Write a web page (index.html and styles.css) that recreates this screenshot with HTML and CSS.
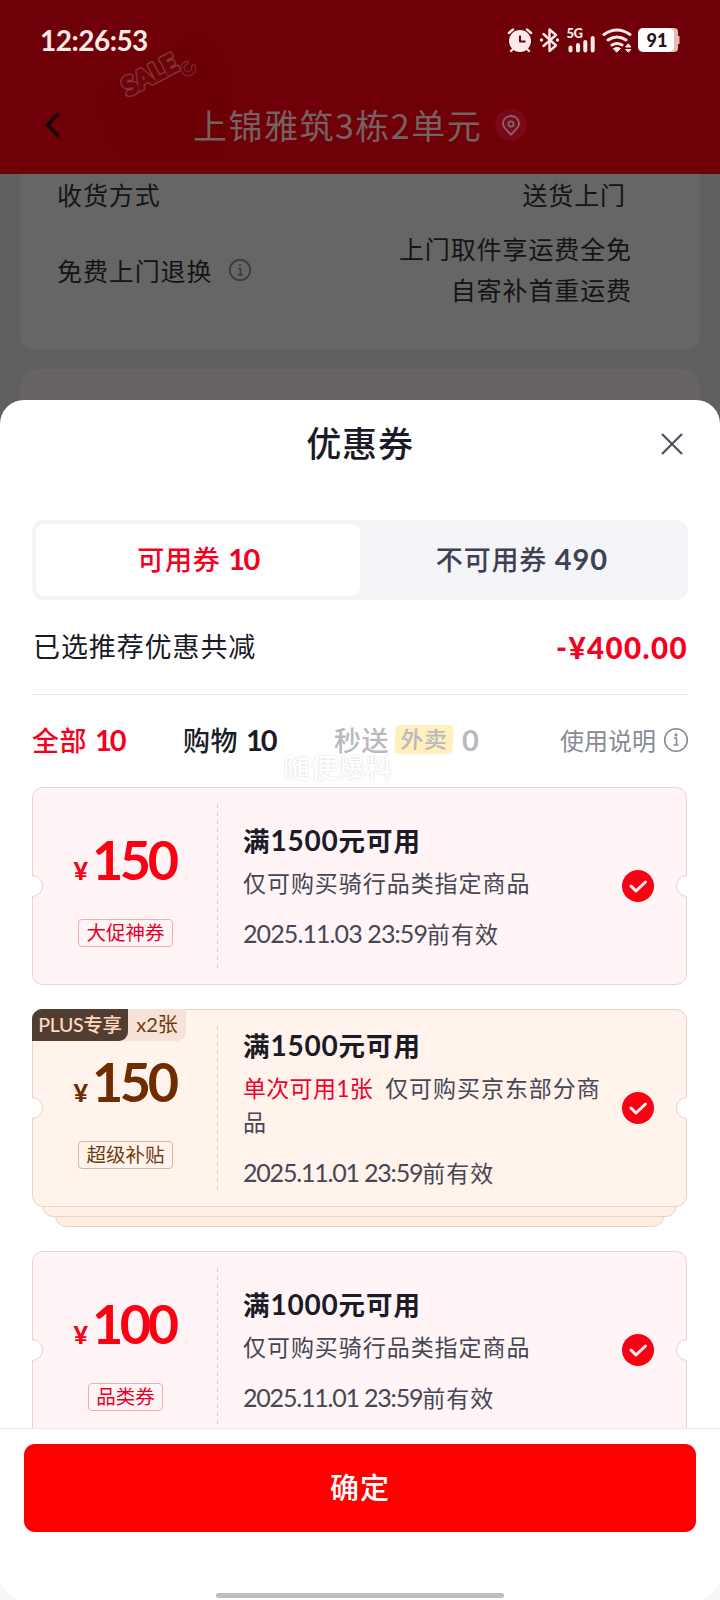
FILE: index.html
```html
<!DOCTYPE html>
<html lang="zh-CN">
<head>
<meta charset="utf-8">
<title>优惠券</title>
<link rel="stylesheet" href="styles.css">
</head>
<body>
<div class="phone">
  <header class="top">
    <svg class="sale" width="260" height="174" viewBox="0 0 260 174">
      <path d="M98 88 200 28 228 60 236 130 222 158H130Q95 150 98 88Z" fill="#640003" opacity=".3"/>
      <g transform="translate(129 96) rotate(-28)">
        <text x="-1" y="0" class="sale-text sale-edge">SALE</text>
        <text x="-1" y="0" class="sale-text sale-fill">SALE</text>
      </g>
      <path d="M187 61a7.500 7.500 0 1 0 8 4a2 2 0 0 0-3.500 1.500a3.800 3.800 0 1 1-4-2.500a1.600 1.600 0 0 0-.5-3Z" fill="none" stroke="#7b2529" stroke-width="1.300"/>
    </svg>
    <div class="status">
      <span class="time">12:26:53</span>
      <svg class="status-icons" width="176" height="30" viewBox="504 25 176 30" fill="none" stroke="#ffeaea" stroke-linecap="round" stroke-linejoin="round">
        <circle cx="520" cy="41" r="11" fill="#ffeaea" stroke="none"/>
        <path d="M508.800 33 513 29.500M531.200 33 527 29.500M512.500 49.500 511 51M527.500 49.500 529 51" stroke-width="2.300"/>
        <path d="M520 35.500V41.500H525.500" stroke="#70000a" stroke-width="2" stroke-linecap="butt"/>
        <path d="M543.500 34 556 45.500 549.500 51V29.500L556 35 543.500 46" stroke-width="2.400"/>
        <circle cx="541.500" cy="40" r="1.700" fill="#ffeaea" stroke="none"/><circle cx="557.500" cy="40" r="1.700" fill="#ffeaea" stroke="none"/>
        <text x="566.500" y="38" class="five-g">5G</text>
        <path d="M570.500 47.500V50.500M578 45V50.500M585.300 42V50.500M592.700 38V50.500" stroke-width="4"/>
        <path d="M604 34.500Q617 25.500 630 34.500M608 40Q617 34 626 40M612 45Q617 42 622 45" stroke-width="3"/>
        <path d="M613.500 48.500Q617 46 620.500 48.500L617 52Z" fill="#ffeaea" stroke-width="1"/>
        <path d="M628.500 44 631 47H626ZM628.500 52 631 49.500H626Z" fill="#ffeaea" stroke-width="1"/>
        <path d="M670 28h4q4 0 4 4v4h1.500v8H678v4q0 4-4 4h-4Z" fill="#eab8bb" stroke="none"/>
        <rect x="638" y="28" width="36" height="24" rx="5" fill="#fff" stroke="none"/>
        <text x="657" y="46.500" class="battery">91</text>
      </svg>
    </div>
    <div class="navbar">
      <svg class="back" width="20" height="30" viewBox="0 0 20 30"><path d="M15.500 4 4.500 15 15.500 26" fill="none" stroke="#150506" stroke-width="3.600"/></svg>
      <h1 class="address">上锦雅筑3栋2单元</h1>
      <svg class="pin" width="32" height="32" viewBox="0 0 32 32"><circle cx="16" cy="16" r="16" fill="#7a0818"/><path d="M16 25.500C12.500 22 8 18.500 8 14.500a8 7.500 0 0 1 16 0C24 18.500 19.500 22 16 25.500Z" fill="none" stroke="#81686c" stroke-width="1.800"/><circle cx="16" cy="15" r="2.600" fill="none" stroke="#81686c" stroke-width="1.800"/></svg>
    </div>
  </header>

  <main class="behind">
    <section class="info">
      <div class="row first"><span>收货方式</span><span class="ship">送货上门</span></div>
      <div class="row second">
        <span class="label">免费上门退换
          <svg width="24" height="24" viewBox="0 0 24 24" fill="none" stroke="#393939" stroke-width="1.700"><circle cx="12" cy="12" r="10.200"/><path d="M10 10.500h2.500v6.500M9.500 17h5.500M11 7h2"/></svg>
        </span>
        <span class="fees">上门取件享运费全免<br>自寄补首重运费</span>
      </div>
    </section>
    <section class="next-card"></section>
  </main>

  <section class="sheet">
    <div class="sheet-head">
      <h2>优惠券</h2>
      <svg class="close" width="24" height="24" viewBox="0 0 24 24"><path d="M2 2 22 22M22 2 2 22" stroke="#4e5060" stroke-width="2.200"/></svg>
    </div>

    <div class="tabs">
      <div class="tab active">可用券 <b>10</b></div>
      <div class="tab">不可用券 <b>490</b></div>
    </div>

    <div class="summary"><span>已选推荐优惠共减</span><strong>-¥400.00</strong></div>

    <div class="filters">
      <span class="filter on">全部 <b>10</b></span>
      <span class="filter shop">购物 <b>10</b></span>
      <span class="filter off">秒送<i>外卖</i><b>0</b></span>
      <span class="help">使用说明
        <svg width="26" height="26" viewBox="0 0 26 26" fill="none" stroke="#888b94" stroke-width="1.600"><circle cx="13" cy="13" r="11.300"/><path d="M11 11h2.500v7M10.500 18h5"/><circle cx="13" cy="7.800" r=".8"/></svg>
      </span>
      <span class="watermark">随便爆料</span>
    </div>

    <div class="list">
      <div class="slot">
        <article class="coupon">
          <div class="value"><div class="price"><small>¥</small>150</div><div class="tag">大促神券</div></div>
          <div class="detail"><h3>满<b>1500</b>元可用</h3><p>仅可购买骑行品类指定商品</p><time><b>2025.11.03 23:59</b>前有效</time></div>
          <svg class="check" width="32" height="32" viewBox="0 0 32 32"><circle cx="16" cy="16" r="16" fill="#fb0012"/><path d="M9 16 14 21 23.500 12" fill="none" stroke="#fff0f1" stroke-width="3" stroke-linecap="round" stroke-linejoin="round"/></svg>
        </article>
      </div>

      <div class="slot stacked">
        <article class="coupon plus">
          <div class="ribbon"><span>PLUS专享</span><em>x2张</em></div>
          <div class="value"><div class="price"><small>¥</small>150</div><div class="tag">超级补贴</div></div>
          <div class="detail"><h3>满<b>1500</b>元可用</h3><p><mark>单次可用1张</mark>仅可购买京东部分商品</p><time class="nov1"><b>2025.11.01 23:59</b>前有效</time></div>
          <svg class="check" width="32" height="32" viewBox="0 0 32 32"><circle cx="16" cy="16" r="16" fill="#fb0012"/><path d="M9 16 14 21 23.500 12" fill="none" stroke="#fff0f1" stroke-width="3" stroke-linecap="round" stroke-linejoin="round"/></svg>
        </article>
        <div class="layer one"></div>
        <div class="layer two"></div>
      </div>

      <div class="slot">
        <article class="coupon">
          <div class="value"><div class="price"><small>¥</small>100</div><div class="tag">品类券</div></div>
          <div class="detail"><h3>满<b>1000</b>元可用</h3><p>仅可购买骑行品类指定商品</p><time class="nov1"><b>2025.11.01 23:59</b>前有效</time></div>
          <svg class="check" width="32" height="32" viewBox="0 0 32 32"><circle cx="16" cy="16" r="16" fill="#fb0012"/><path d="M9 16 14 21 23.500 12" fill="none" stroke="#fff0f1" stroke-width="3" stroke-linecap="round" stroke-linejoin="round"/></svg>
        </article>
      </div>
    </div>

    <footer class="footer">
      <button class="confirm">确定</button>
      <div class="home"></div>
    </footer>
  </section>
</div>
</body>
</html>
```
FILE: styles.css
```css
* { box-sizing: border-box; margin: 0; padding: 0; }
body { background: #f7f7f7; }
b, i, em { font-weight: inherit; font-style: normal; }
.phone {
  position: relative;
  width: 720px;
  height: 1600px;
  overflow: hidden;
  display: flex;
  flex-direction: column;
  font-family: Lato, "Noto Sans CJK SC", sans-serif;
  color: #1a1b27;
  white-space: nowrap;
}

/* Header */
.top { position: relative; height: 174px; flex: none; background: #6f0008; }
.sale { position: absolute; left: 0; top: 0; }
.sale-text { font: 900 25px Lato, sans-serif; letter-spacing: 0; }
.sale-edge { fill: none; stroke: #853338; stroke-width: 4.5px; stroke-linejoin: round; }
.sale-fill { fill: #6d0408; stroke: #6d0408; stroke-width: 1.6px; stroke-linejoin: round; }
.status { position: relative; height: 80px; padding: 0 40px; display: flex; justify-content: space-between; align-items: center; }
.time { font-size: 28px; font-weight: 700; line-height: 30px; letter-spacing: -.5px; color: #ffeaea; }
.five-g { font: 900 13px Lato, sans-serif; fill: #ffeaea; stroke: none; letter-spacing: -.5px; }
.battery { font: 900 18px Lato, sans-serif; fill: #2b1114; stroke: none; text-anchor: middle; }
.navbar { position: relative; height: 90px; display: flex; align-items: center; padding-left: 43px; }
.back { flex: none; }
.address { margin-left: 130px; font: 400 34px/50px "Noto Sans CJK SC", sans-serif; letter-spacing: 1.5px; color: #756263; }
.pin { margin-left: 13px; }

/* Dimmed page below the sheet */
.behind { height: 256px; flex: none; background: #606060; padding: 0 20px; }
.info { height: 175px; background: #666; border-radius: 0 0 14px 14px; padding: 0 56px 0 37px; font-size: 25px; letter-spacing: .9px; color: #141414; }
.row { display: flex; justify-content: space-between; align-items: center; }
.first { height: 40px; }
.ship { margin-right: 18px; }
.second { height: 111px; padding-right: 12px; }
.label { display: flex; align-items: center; gap: 16px; }
.fees { text-align: right; line-height: 41px; padding-top: 1px; }
.next-card { height: 60px; margin-top: 20px; background: #696365; border-radius: 20px 20px 0 0; border-top: 2px solid #666; }

/* Sheet */
.sheet { position: absolute; top: 400px; left: 0; right: 0; bottom: 0; background: #fff; border-radius: 24px; overflow: hidden; display: flex; flex-direction: column; }
.sheet-head { position: relative; flex: none; height: 120px; padding-top: 17px; text-align: center; }
.sheet-head h2 { font-size: 35px; font-weight: 500; line-height: 52px; letter-spacing: .8px; }
.close { position: absolute; right: 36px; top: 32px; }
.tabs { flex: none; display: flex; height: 80px; margin: 0 32px; padding: 4px; border-radius: 11px; background: #f4f5f9; }
.tab { flex: 1; border-radius: 9px; text-align: center; font-size: 27px; font-weight: 500; line-height: 70px; color: #3f4150; letter-spacing: .8px; }
.tab b { font-size: 29px; font-weight: 700; letter-spacing: 1px; }
.tab.active { background: #fff; color: #f5001e; }
.tab.active b { font-size: 29px; letter-spacing: -1.6px; }
.summary { flex: none; height: 95px; margin: 0 32px; padding: 0 0 3px 1px; display: flex; justify-content: space-between; align-items: center; border-bottom: 1px solid #e9e9ec; font-size: 27px; letter-spacing: .9px; }
.summary strong { font-weight: 900; font-size: 29.500px; letter-spacing: 1.4px; margin: 3px 0 0; color: #f5001e; }
.filters { position: relative; flex: none; height: 92px; margin: 0 32px; padding-bottom: 3px; display: flex; align-items: center; font-size: 27px; font-weight: 500; letter-spacing: .5px; }
.filter { display: flex; align-items: center; gap: 8px; }
.filter b { font-size: 29px; font-weight: 700; letter-spacing: -2px; }
.on { color: #f5001e; width: 151px; }
.shop { width: 151px; }
.off { color: #b8b9bf; gap: 0; }
.off i { width: 58px; height: 29px; margin: 0 9px 0 6px; border-radius: 4px; background: #fff0bd; font-size: 23px; line-height: 28px; text-align: center; transform: skewX(-3deg); }
.help { margin-left: auto; display: flex; align-items: center; gap: 7px; font-size: 24px; font-weight: 400; letter-spacing: 0; color: #888b94; margin-right: -1px; }
.watermark { position: absolute; left: 251px; top: 57px; font-size: 27px; line-height: 32px; font-weight: 500; color: #fff; text-shadow: 0 0 2px #d4d4d4; }

/* Coupons */
.list { flex: none; height: 641px; overflow: hidden; padding: 0 33px 0 32px; display: flex; flex-direction: column; gap: 24px; }
.slot { flex: none; }
.coupon { position: relative; z-index: 3; height: 198px; display: flex; border: 1px solid #f3cdd2; border-radius: 11px; background: #fff5f6; clip-path: inset(0); }
.coupon::before, .coupon::after { content: ""; position: absolute; top: 87px; width: 20px; height: 20px; border-radius: 50%; border: 1px solid #f3cdd2; background: #fff; }
.coupon::before { left: -12px; }
.coupon::after { right: -12px; }
.value { flex: none; width: 185px; height: 165px; margin-top: 16px; display: flex; flex-direction: column; align-items: center; background: repeating-linear-gradient(#eccbd0 0 4px, transparent 4px 8px) right / 1px 100% no-repeat; color: #fb0012; }
.price { height: 86px; padding-top: 21px; display: flex; align-items: baseline; font-size: 54px; font-weight: 700; line-height: 70px; letter-spacing: -3.5px; margin-left: -2px; }
.price small { font-size: 25px; font-weight: 900; letter-spacing: 0; margin-right: 4px; }
.tag { margin-top: 29px; height: 28px; border: 1px solid #f5a9b3; border-radius: 4px; padding: 0 7px; font-size: 19.500px; line-height: 26px; letter-spacing: 0; color: #e60025; }
.detail { width: 388px; padding: 35px 0 0 25px; }
.detail h3 { font-size: 26.500px; font-weight: 700; line-height: 34px; letter-spacing: .9px; }
.detail h3 b { font-size: 28px; letter-spacing: .8px; }
.detail p { margin-top: 8px; font-size: 23px; line-height: 34px; letter-spacing: .95px; color: #454754; white-space: normal; }
.detail time { display: block; margin-top: 16px; font-size: 23px; line-height: 34px; letter-spacing: 1px; color: #454754; }
.detail time b { font-size: 25px; letter-spacing: -.9px; }
.detail .nov1 b { letter-spacing: -1.2px; }
.check { flex: none; margin: 82px 0 0 16px; }

.plus { background: #fff3ec; border-color: #ead3c4; }
.plus::before, .plus::after { border-color: #ead3c4; }
.plus .value { color: #6f2c00; background-image: repeating-linear-gradient(#e6cdbf 0 4px, transparent 4px 8px); }
.plus .tag { color: #6f3b0c; border-color: #d3b8a4; }
.plus .detail { padding-top: 18px; }
.plus mark { background: none; color: #f0002c; margin-right: 12px; letter-spacing: .3px; }
.ribbon { position: absolute; left: -1px; top: -1px; height: 32px; display: flex; border-radius: 10px 0 9px 0; background: #f7e2d7; overflow: hidden; font-size: 20px; line-height: 31px; }
.ribbon span { width: 96px; text-align: center; font-size: 19.500px; letter-spacing: -.3px; color: #ffd9c2; background: #523d33; border-radius: 0 0 9px 0; font-weight: 500; }
.ribbon em { width: 58px; text-align: center; color: #6f3b0c; }
.layer { position: relative; height: 30px; margin: -20px 10px 0; border: 1px solid #ead3c4; border-radius: 11px; background: #ffefe5; }
.one { z-index: 2; }
.two { z-index: 1; margin: -20px 23px 0; background: #ffeee0; }

/* Footer */
.footer { flex: none; height: 172px; border-top: 1px solid #e9e9ec; padding: 15px 24px 0; background: #fff; display: flex; flex-direction: column; align-items: center; }
.confirm { width: 672px; height: 88px; padding-bottom: 4px; border: 0; border-radius: 11px; background: #fe0000; color: #fff; font: 500 29px/40px "Noto Sans CJK SC", sans-serif; letter-spacing: 1px; }
.home { width: 288px; height: 5px; margin-top: 61px; border-radius: 3px; background: #bebebe; }
```
